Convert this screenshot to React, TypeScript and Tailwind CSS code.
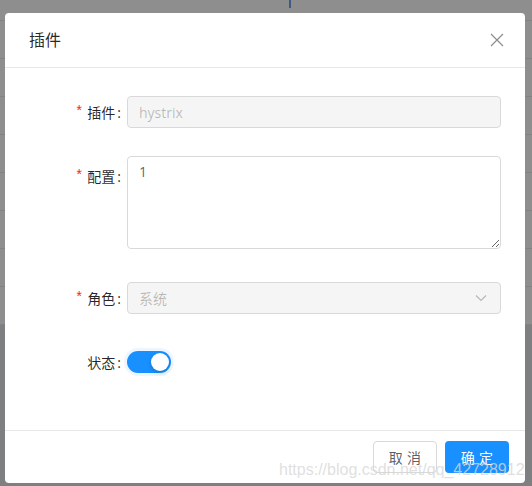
import React from 'react';

const font = { fontFamily: '"Open Sans", "Noto Sans CJK SC", sans-serif' };

function Label({ text, required }: { text: string; required?: boolean }) {
  return (
    <div className="w-[98px] shrink-0 h-10 flex items-center justify-end pr-[6px] text-[14px] text-black/85">
      {required && <span className="text-[#f5222d] mr-[4px] text-[14px] leading-none" style={{ fontFamily: 'SimSun, "Liberation Mono", monospace' }}>*</span>}
      <span>{text}</span>
      <span className="ml-[2px]">:</span>
    </div>
  );
}

export default function App() {
  const rows = Array.from({ length: 8 });

  return (
    <div className="relative w-[532px] h-[486px] overflow-hidden bg-[#8e8e8e]" style={font}>
      {/* page behind the mask */}
      <div className="flex flex-col">
        <div className="h-[21px] border-b border-[#828282] relative">
          <div className="absolute left-[289px] top-0 w-[2px] h-[8px] bg-[#3d5a80]" />
        </div>
        {rows.map((_, i) => (
          <div key={i} className="h-[38px] border-b border-[#828282]" />
        ))}
        <div className="h-[200px] bg-[#7e7f80]" />
      </div>

      {/* modal */}
      <div className="absolute left-[5px] top-[13px] w-[520px] bg-white rounded-[4px] flex flex-col">
        <div className="h-[55px] pl-6 pr-[21px] flex items-center justify-between border-b border-[#e8e8e8]">
          <span className="text-[16px] text-black/85 font-normal">插件</span>
          <svg width="14" height="14" viewBox="0 0 14 14">
            <path d="M1 1 L13 13 M13 1 L1 13" stroke="rgba(0,0,0,0.45)" strokeWidth="1.2" />
          </svg>
        </div>

        <div className="p-6 flex flex-col gap-6">
          <div className="flex">
            <Label text="插件" required />
            <div className="h-10 flex items-center">
              <div className="w-[374px] h-8 rounded-[4px] border border-[#d9d9d9] bg-[#f5f5f5] px-[11px] flex items-center text-[14px] text-black/25">
                hystrix
              </div>
            </div>
          </div>

          <div className="flex">
            <Label text="配置" required />
            <div className="pb-[5px]">
              <textarea
                readOnly
                value="1"
                className="block w-[374px] h-[93px] rounded-[4px] border border-[#d9d9d9] bg-white px-[11px] py-[4px] text-[14px] text-black/65 outline-none resize-y"
                style={font}
              />
            </div>
          </div>

          <div className="flex">
            <Label text="角色" required />
            <div className="h-10 flex items-center">
              <div className="w-[374px] h-8 rounded-[4px] border border-[#d9d9d9] bg-[#f5f5f5] pl-[11px] pr-[13px] flex items-center justify-between text-[14px] text-black/25">
                <span>系统</span>
                <svg width="12" height="8" viewBox="0 0 12 8">
                  <path d="M1 1.5 L6 6.5 L11 1.5" fill="none" stroke="rgba(0,0,0,0.25)" strokeWidth="1.2" />
                </svg>
              </div>
            </div>
          </div>

          <div className="flex mb-6">
            <Label text="状态" />
            <div className="h-10 flex items-center">
              <div className="w-[44px] h-[22px] rounded-full bg-[#1890ff] flex items-center justify-end pr-[2px] shadow-[0_0_0_3px_rgba(24,144,255,0.08)]">
                <div className="w-[18px] h-[18px] rounded-full bg-white shadow-[0_2px_4px_rgba(0,35,11,0.2)]" />
              </div>
            </div>
          </div>
        </div>

        <div className="border-t border-[#e8e8e8] px-4 py-[10px] flex justify-end gap-2">
          <button className="w-[64px] h-8 rounded-[4px] border border-[#d9d9d9] bg-white text-[14px] text-black/65 tracking-[0.3em] pl-[4px]">
            取消
          </button>
          <button className="w-[64px] h-8 rounded-[4px] bg-[#1890ff] text-white text-[14px] tracking-[0.3em] pl-[4px]">
            确定
          </button>
        </div>
      </div>

      {/* watermark */}
      <div
        className="absolute left-[279px] top-[458px] text-[16px] text-[rgba(215,215,215,0.8)] whitespace-nowrap"
        style={{ fontFamily: '"Liberation Sans", Arial, sans-serif' }}
      >
        https://blog.csdn.net/qq_42728912
      </div>
    </div>
  );
}
